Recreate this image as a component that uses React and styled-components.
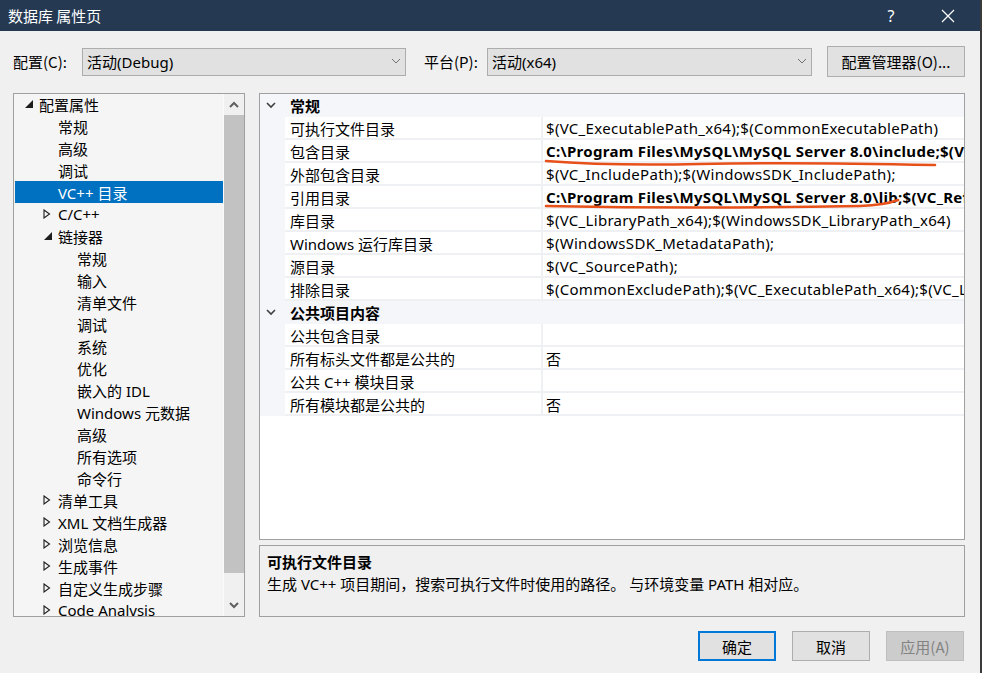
import styled, { createGlobalStyle } from "styled-components";

const GlobalStyle = createGlobalStyle`
  html, body {
    margin: 0;
    padding: 0;
    background: #f0f0f0;
  }
  body {
    font-family: "Noto Sans", "Noto Sans CJK SC", sans-serif;
    font-size: 15px;
    color: #000;
  }
`;

const Window = styled.div`
  position: relative;
  width: 982px;
  height: 673px;
  display: flex;
  flex-direction: column;
  background: #f0f0f0;
  box-sizing: border-box;
  border-right: 2px solid #3b3b3b;
  overflow: hidden;
`;

const TitleBar = styled.div`
  height: 31px;
  flex: none;
  display: flex;
  align-items: center;
  background: #253a52;
  color: #fff;
  padding-left: 8px;
`;

const TitleText = styled.div`
  flex: 1;
  font-size: 15px;
  font-family: "Noto Sans CJK SC", sans-serif;
`;

const TitleButton = styled.div`
  width: 46px;
  height: 31px;
  display: flex;
  align-items: center;
  justify-content: center;
  color: #fff;
  font-size: 16px;
  margin-right: ${(p) => p.$mr || 0}px;
`;

const Body = styled.div`
  flex: 1;
  display: flex;
  flex-direction: column;
  padding: 0 15px 0 13px;
`;

const ConfigRow = styled.div`
  margin-top: 15px;
  height: 31px;
  display: flex;
  align-items: center;
`;

const Label = styled.div`
  width: ${(p) => p.$w}px;
  margin-left: ${(p) => p.$ml || 0}px;
  font-family: "Noto Sans CJK SC", sans-serif;
`;

const Combo = styled.div`
  width: ${(p) => p.$w}px;
  height: 28px;
  box-sizing: border-box;
  border: 1px solid #adadad;
  background: #e1e1e1;
  display: flex;
  align-items: center;
  padding: 0 4px 0 4px;
`;

const ComboText = styled.div`
  flex: 1;
`;

const Button = styled.div`
  width: ${(p) => p.$w || 78}px;
  height: ${(p) => p.$h || 30}px;
  margin-left: ${(p) => p.$ml || 0}px;
  box-sizing: border-box;
  border: ${(p) => (p.$primary ? "2px solid #0078d7" : p.$disabled ? "1px solid #bfbfbf" : "1px solid #adadad")};
  background: ${(p) => (p.$disabled ? "#cccccc" : "#e1e1e1")};
  color: ${(p) => (p.$disabled ? "#838383" : "#000")};
  display: flex;
  align-items: center;
  justify-content: center;
  font-family: "Noto Sans CJK SC", sans-serif;
`;

const Main = styled.div`
  margin-top: 16px;
  height: 524px;
  display: flex;
  gap: 14px;
`;

const Tree = styled.div`
  width: 232px;
  box-sizing: border-box;
  border: 1px solid #a0a0a0;
  background: #f5f5f5;
  display: flex;
`;

const TreeList = styled.div`
  flex: 1;
  overflow: hidden;
  padding-left: 1px;
  margin-top: -1px;
`;

const TreeRow = styled.div`
  height: 22px;
  display: flex;
  align-items: center;
  padding-left: ${(p) => 9 + p.$level * 19}px;
  background: ${(p) => (p.$selected ? "#0070c0" : "transparent")};
  color: ${(p) => (p.$selected ? "#fff" : "#000")};
  white-space: nowrap;
`;

const ArrowSlot = styled.div`
  width: 15px;
  height: 22px;
  display: flex;
  align-items: center;
  justify-content: flex-start;
  flex: none;
`;

const Scrollbar = styled.div`
  width: 20px;
  flex: none;
  background: #f0f0f0;
  display: flex;
  flex-direction: column;
  border-left: 1px solid #fafafa;
`;

const ScrollArrow = styled.div`
  height: 21px;
  display: flex;
  align-items: center;
  justify-content: center;
`;

const ScrollTrack = styled.div`
  flex: 1;
  padding-bottom: 22px;
  display: flex;
`;

const ScrollThumb = styled.div`
  flex: 1;
  background: #c2c2c2;
`;

const RightCol = styled.div`
  flex: 1;
  display: flex;
  flex-direction: column;
  gap: 5px;
`;

const Grid = styled.div`
  height: 447px;
  box-sizing: border-box;
  border: 1px solid #a0a0a0;
  background: #fff;
  display: flex;
  flex-direction: column;
  overflow: hidden;
`;

const GridRow = styled.div`
  height: 23px;
  flex: none;
  display: grid;
  grid-template-columns: 25px 258px 1fr;
`;

const CategoryRow = styled.div`
  height: 23px;
  flex: none;
  display: flex;
  align-items: center;
  background: #f5f6f9;
  font-weight: bold;
  font-family: "Noto Sans CJK SC", sans-serif;
`;

const Gutter = styled.div`
  background: #f5f6f9;
`;

const Cell = styled.div`
  box-sizing: border-box;
  border-bottom: 2px solid #eff0f3;
  border-right: ${(p) => (p.$name ? "2px solid #eff0f3" : "none")};
  padding-left: ${(p) => (p.$name ? 5 : 3)}px;
  display: flex;
  align-items: center;
  white-space: nowrap;
  overflow: hidden;
  font-weight: ${(p) => (p.$bold ? "bold" : "normal")};
  letter-spacing: ${(p) => (p.$name ? 0 : 0.3)}px;
  padding-top: 1px;
`;

const Desc = styled.div`
  flex: 1;
  box-sizing: border-box;
  border: 1px solid #a0a0a0;
  background: #f0f0f0;
  padding: 4px 7px;
  line-height: 23px;
`;

const DescTitle = styled.div`
  font-weight: bold;
  font-family: "Noto Sans CJK SC", sans-serif;
`;

const Footer = styled.div`
  margin-top: 14px;
  display: flex;
  justify-content: flex-end;
  gap: 16px;
  padding-right: 1px;
`;

const Overlay = styled.svg`
  position: absolute;
  left: 0;
  top: 0;
  pointer-events: none;
`;

const ExpandedIcon = () => (
  <svg width="10" height="10" viewBox="0 0 10 10">
    <polygon points="9,1 9,9 1,9" fill="#1e1e1e" />
  </svg>
);

const CollapsedIcon = ({ color = "#1e1e1e" }) => (
  <svg width="8" height="10" viewBox="0 0 8 10">
    <polygon points="1,1 6.5,5 1,9" fill="none" stroke={color} strokeWidth="1.1" />
  </svg>
);

const Chevron = ({ up, color = "#606060", w = 10, sw = 2 }) => (
  <svg width={w} height="7" viewBox="0 0 10 7">
    {up ? (
      <polyline points="1,6 5,2 9,6" fill="none" stroke={color} strokeWidth={sw} />
    ) : (
      <polyline points="1,1 5,5 9,1" fill="none" stroke={color} strokeWidth={sw} />
    )}
  </svg>
);

const treeItems = [
  { level: 0, arrow: "open", label: "配置属性" },
  { level: 1, label: "常规" },
  { level: 1, label: "高级" },
  { level: 1, label: "调试" },
  { level: 1, label: "VC++ 目录", selected: true },
  { level: 1, arrow: "closed", label: "C/C++" },
  { level: 1, arrow: "open", label: "链接器" },
  { level: 2, label: "常规" },
  { level: 2, label: "输入" },
  { level: 2, label: "清单文件" },
  { level: 2, label: "调试" },
  { level: 2, label: "系统" },
  { level: 2, label: "优化" },
  { level: 2, label: "嵌入的 IDL" },
  { level: 2, label: "Windows 元数据" },
  { level: 2, label: "高级" },
  { level: 2, label: "所有选项" },
  { level: 2, label: "命令行" },
  { level: 1, arrow: "closed", label: "清单工具" },
  { level: 1, arrow: "closed", label: "XML 文档生成器" },
  { level: 1, arrow: "closed", label: "浏览信息" },
  { level: 1, arrow: "closed", label: "生成事件" },
  { level: 1, arrow: "closed", label: "自定义生成步骤" },
  { level: 1, arrow: "closed", label: "Code Analysis" },
];

const groups = [
  {
    title: "常规",
    rows: [
      ["可执行文件目录", "$(VC_ExecutablePath_x64);$(CommonExecutablePath)"],
      ["包含目录", "C:\\Program Files\\MySQL\\MySQL Server 8.0\\include;$(VC_IncludePath);$(WindowsSDK_IncludePath);", true],
      ["外部包含目录", "$(VC_IncludePath);$(WindowsSDK_IncludePath);"],
      ["引用目录", "C:\\Program Files\\MySQL\\MySQL Server 8.0\\lib;$(VC_ReferencesPath_x64);", true],
      ["库目录", "$(VC_LibraryPath_x64);$(WindowsSDK_LibraryPath_x64)"],
      ["Windows 运行库目录", "$(WindowsSDK_MetadataPath);"],
      ["源目录", "$(VC_SourcePath);"],
      ["排除目录", "$(CommonExcludePath);$(VC_ExecutablePath_x64);$(VC_LibraryPath_x64)"],
    ],
  },
  {
    title: "公共项目内容",
    rows: [
      ["公共包含目录", ""],
      ["所有标头文件都是公共的", "否"],
      ["公共 C++ 模块目录", ""],
      ["所有模块都是公共的", "否"],
    ],
  },
];

export default function App() {
  return (
    <>
      <GlobalStyle />
      <Window>
        <TitleBar>
          <TitleText>数据库 属性页</TitleText>
          <TitleButton $mr={11}>?</TitleButton>
          <TitleButton $mr={9}>
            <svg width="14" height="14" viewBox="0 0 14 14">
              <path d="M1 1 L13 13 M13 1 L1 13" stroke="#fff" strokeWidth="1.2" />
            </svg>
          </TitleButton>
        </TitleBar>
        <Body>
          <ConfigRow>
            <Label $w={69}>配置(C):</Label>
            <Combo $w={324}>
              <ComboText>活动(Debug)</ComboText>
              <Chevron color="#707070" sw={1} />
            </Combo>
            <Label $w={63} $ml={18}>平台(P):</Label>
            <Combo $w={325}>
              <ComboText>活动(x64)</ComboText>
              <Chevron color="#707070" sw={1} />
            </Combo>
            <Button $w={138} $h={31} $ml={15}>配置管理器(O)...</Button>
          </ConfigRow>
          <Main>
            <Tree>
              <TreeList>
                {treeItems.map((it, i) => (
                  <TreeRow key={i} $level={it.level} $selected={it.selected}>
                    <ArrowSlot>
                      {it.arrow === "open" && <ExpandedIcon />}
                      {it.arrow === "closed" && <CollapsedIcon />}
                    </ArrowSlot>
                    {it.label}
                  </TreeRow>
                ))}
              </TreeList>
              <Scrollbar>
                <ScrollArrow>
                  <Chevron up />
                </ScrollArrow>
                <ScrollTrack>
                  <ScrollThumb />
                </ScrollTrack>
                <ScrollArrow>
                  <Chevron />
                </ScrollArrow>
              </Scrollbar>
            </Tree>
            <RightCol>
              <Grid>
                {groups.map((g) => (
                  <div key={g.title}>
                    <CategoryRow>
                      <svg width="30" height="8" viewBox="0 0 30 8">
                        <polyline points="7,1 11,5 15,1" fill="none" stroke="#404040" strokeWidth="1.6" />
                      </svg>
                      {g.title}
                    </CategoryRow>
                    {g.rows.map(([name, value, bold]) => (
                      <GridRow key={name}>
                        <Gutter />
                        <Cell $name>{name}</Cell>
                        <Cell $bold={bold}>{value}</Cell>
                      </GridRow>
                    ))}
                  </div>
                ))}
              </Grid>
              <Desc>
                <DescTitle>可执行文件目录</DescTitle>
                <div>生成 VC++ 项目期间，搜索可执行文件时使用的路径。 与环境变量 PATH 相对应。</div>
              </Desc>
            </RightCol>
          </Main>
          <Footer>
            <Button $primary>确定</Button>
            <Button>取消</Button>
            <Button $disabled>应用(A)</Button>
          </Footer>
        </Body>
        <Overlay width="982" height="673" viewBox="0 0 982 673">
          <path d="M546 161 Q 610 166 700 164 T 935 165" fill="none" stroke="#e8501a" strokeWidth="2.6" strokeLinecap="round" />
          <path d="M546 206 Q 700 209 860 206 Q 885 205 898 200" fill="none" stroke="#e8501a" strokeWidth="2.6" strokeLinecap="round" />
        </Overlay>
      </Window>
    </>
  );
}
